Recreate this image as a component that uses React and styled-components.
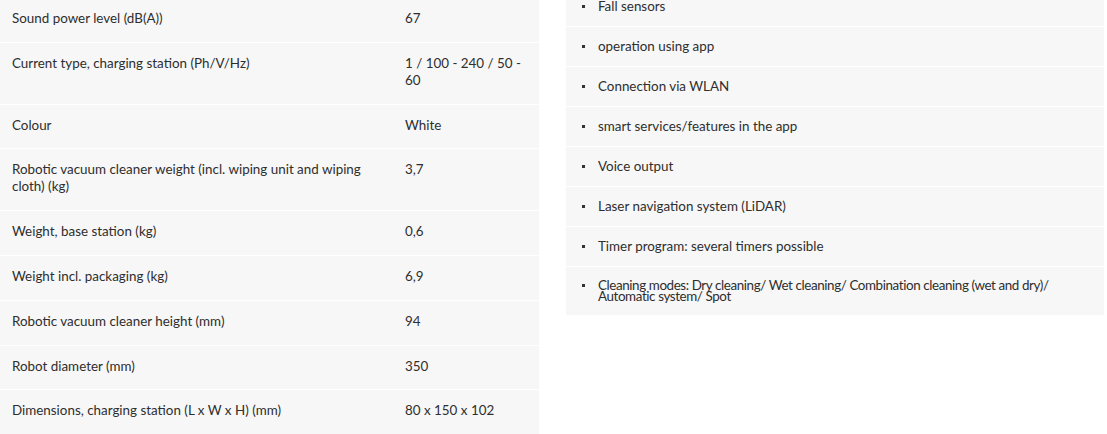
import React from "react";
import styled, { createGlobalStyle } from "styled-components";

const GlobalStyle = createGlobalStyle`
  body {
    margin: 0;
    background: #ffffff;
    font-family: Lato, "Liberation Sans", sans-serif;
    color: #2e2e2e;
    overflow: hidden;
  }
`

const specs = [
  ["Sound power level (dB(A))", "67"],
  ["Current type, charging station (Ph/V/Hz)", "1 / 100 - 240 / 50 - 60"],
  ["Colour", "White"],
  ["Robotic vacuum cleaner weight (incl. wiping unit and wiping cloth) (kg)", "3,7"],
  ["Weight, base station (kg)", "0,6"],
  ["Weight incl. packaging (kg)", "6,9"],
  ["Robotic vacuum cleaner height (mm)", "94"],
  ["Robot diameter (mm)", "350"],
  ["Dimensions, charging station (L x W x H) (mm)", "80 x 150 x 102"],
]

const features = [
  "Fall sensors",
  "operation using app",
  "Connection via WLAN",
  "smart services/features in the app",
  "Voice output",
  "Laser navigation system (LiDAR)",
  "Timer program: several timers possible",
  "Cleaning modes: Dry cleaning/ Wet cleaning/ Combination cleaning (wet and dry)/ Automatic system/ Spot",
]

const Page = styled.main`
  display: flex;
  align-items: flex-start;
  gap: 27px;
  width: 1107px;
`

const SpecTable = styled.dl`
  width: 539px;
  margin: -2px 0 0;
  flex-shrink: 0;
`

const SpecRow = styled.div`
  display: grid;
  grid-template-columns: 393px 1fr;
  background: #f7f7f7;
  border-bottom: 1px solid #ffffff;
`

const Cell = styled.dt`
  margin: 0;
  padding: 12px 12px 14.8px;
  font-size: 13.4px;
  line-height: 17px;
`

const Value = styled(Cell).attrs({ as: "dd" })``

const FeatureList = styled.ul`
  width: 538px;
  margin: -13px 0 0;
  padding: 0;
  list-style: none;
`

const FeatureItem = styled.li`
  display: flex;
  align-items: flex-start;
  padding: 14px 16px;
  background: #f7f7f7;
  border-bottom: 1px solid #ffffff;
  font-size: 13.4px;
  line-height: 11px;

  &:last-child {
    padding: 13px 16px;
    border-bottom: none;
    letter-spacing: -0.4px;
  }
`

const Bullet = styled.span`
  width: 3px;
  height: 3px;
  margin: 4px 13px 0 0;
  background: #333333;
  flex-shrink: 0;
`

export default function App() {
  return (
    <>
      <GlobalStyle />
      <Page>
        <SpecTable>
          {specs.map(([label, value]) => (
            <SpecRow key={label}>
              <Cell>{label}</Cell>
              <Value>{value}</Value>
            </SpecRow>
          ))}
        </SpecTable>
        <FeatureList>
          {features.map((text) => (
            <FeatureItem key={text}>
              <Bullet />
              <span>{text}</span>
            </FeatureItem>
          ))}
        </FeatureList>
      </Page>
    </>
  )
}
